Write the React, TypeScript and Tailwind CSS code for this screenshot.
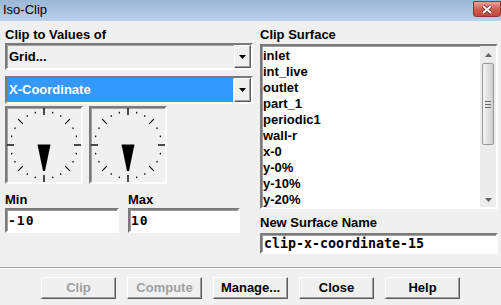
import React from "react";

const sunken =
  "border-2 border-t-[#7a7a7a] border-l-[#7a7a7a] border-b-[#ffffff] border-r-[#ffffff] shadow-[inset_1px_1px_0_#a0a0a0]";
const raised =
  "border border-t-white border-l-white border-b-[#5a5a5a] border-r-[#5a5a5a] shadow-[inset_-1px_-1px_0_#a0a0a0]";

const surfaces = ["inlet", "int_live", "outlet", "part_1", "periodic1", "wall-r", "x-0", "y-0%", "y-10%", "y-20%"];

function DownArrow() {
  return (
    <svg width="7" height="4" viewBox="0 0 7 4">
      <polygon points="0,0 7,0 3.5,4" fill="#000" />
    </svg>
  );
}

function Dropdown({ label, selected }: { label: string; selected?: boolean }) {
  return (
    <div className={`flex h-full w-full ${sunken} bg-[#f0f0f0]`}>
      <div
        className={`flex flex-1 items-center pl-[2px] ${
          selected ? "bg-[#3399ff] text-white" : "text-black"
        }`}
      >
        {label}
      </div>
      <div className={`ml-[1px] flex w-[17px] items-center justify-center bg-[#f0f0f0] ${raised}`}>
        <DownArrow />
      </div>
    </div>
  );
}

function Dial() {
  const c = 39;
  const marks = [];
  for (let i = 0; i < 24; i++) {
    const a = (i * 15 * Math.PI) / 180;
    const sx = Math.sin(a);
    const sy = -Math.cos(a);
    if (i % 6 === 0) {
      marks.push(
        <line key={i} x1={c + sx * 30} y1={c + sy * 30} x2={c + sx * 38} y2={c + sy * 38} stroke="#000" strokeWidth="1.4" />
      );
    } else if (i % 3 === 0) {
      marks.push(
        <line key={i} x1={c + sx * 30} y1={c + sy * 30} x2={c + sx * 36.5} y2={c + sy * 36.5} stroke="#000" strokeWidth="1.1" />
      );
    } else {
      marks.push(<rect key={i} x={c + sx * 33.5 - 0.6} y={c + sy * 33.5 - 0.8} width="1.2" height="1.6" fill="#000" />);
    }
  }
  return (
    <div className={`h-[78px] w-[78px] ${sunken} bg-[#f0f0f0]`}>
      <svg width="74" height="74" viewBox="2 2 74 74">
        {marks}
        <polygon points="32.5,38.5 45.5,38.5 40,65 38,65" fill="#000" />
      </svg>
    </div>
  );
}

function Button({ label, disabled }: { label: string; disabled?: boolean }) {
  return (
    <div
      className={`flex h-[22px] w-[75px] items-center justify-center bg-[#f0f0f0] ${raised} ${
        disabled ? "text-[#a0a0a0]" : "text-black"
      }`}
    >
      {label}
    </div>
  );
}

export default function App() {
  return (
    <div className="flex h-[305px] w-[501px] flex-col overflow-hidden bg-[#f0f0f0] font-['Liberation_Sans',Arial,sans-serif] text-[13px] font-bold">
      {/* title bar */}
      <div className="flex h-[21px] items-start justify-between bg-gradient-to-b from-[#9cb6d6] to-[#bad1ea]">
        <span className="pl-[3px] pt-[2px] text-[13px] font-normal leading-[16px] text-black">Iso-Clip</span>
        <div className="mt-[1px] flex h-[16px] w-[28px] items-center justify-center rounded-b-[3px] border border-[#8a3a32] bg-gradient-to-b from-[#e2a49c] via-[#cf5e52] to-[#c4463a]">
          <svg width="12" height="9" viewBox="0 0 12 9">
            <path d="M2 1 L10 8 M10 1 L2 8" stroke="#5a2a26" strokeWidth="3.4" />
            <path d="M2 1 L10 8 M10 1 L2 8" stroke="#fff" strokeWidth="2" />
          </svg>
        </div>
      </div>

      {/* main content */}
      <div className="flex h-[246px] pt-[6px]">
        <div className="ml-[5px] flex w-[248px] flex-col">
          <div className="h-[16px] leading-[16px]">Clip to Values of</div>
          <div className="h-[27px]">
            <Dropdown label="Grid..." />
          </div>
          <div className="mt-[6px] h-[28px]">
            <Dropdown label="X-Coordinate" selected />
          </div>
          <div className="mt-[2px] flex gap-[6px]">
            <Dial />
            <Dial />
          </div>
          <div className="mt-[8px] flex gap-[9px]">
            <div className="flex w-[114px] flex-col">
              <div className="h-[16px] leading-[16px]">Min</div>
              <div className={`flex h-[25px] items-center bg-white pl-[1px] font-['DejaVu_Sans_Mono',monospace] text-[13px] tracking-[1px] ${sunken}`}>
                -10
              </div>
            </div>
            <div className="flex w-[112px] flex-col">
              <div className="h-[16px] leading-[16px]">Max</div>
              <div className={`flex h-[25px] items-center bg-white pl-[1px] font-['DejaVu_Sans_Mono',monospace] text-[13px] tracking-[1px] ${sunken}`}>
                10
              </div>
            </div>
          </div>
        </div>

        <div className="ml-[7px] flex w-[238px] flex-col">
          <div className="h-[16px] leading-[16px]">Clip Surface</div>
          <div className={`mt-[1px] flex h-[165px] bg-white ${sunken}`}>
            <div className="flex flex-1 flex-col pl-[1px] pt-[2px]">
              {surfaces.map((s) => (
                <div key={s} className="h-[16px] leading-[16px]">
                  {s}
                </div>
              ))}
            </div>
            <div className="flex w-[16px] flex-col items-center bg-[#ececec]">
              <div className="flex h-[17px] items-center justify-center">
                <svg width="7" height="4" viewBox="0 0 7 4">
                  <polygon points="0,4 7,4 3.5,0" fill="#606060" />
                </svg>
              </div>
              <div className="flex h-[82px] w-[12px] flex-col items-center justify-center gap-[2px] rounded-[2px] border border-[#9a9a9a] bg-gradient-to-r from-[#f4f4f4] via-[#e2e2e2] to-[#cfcfcf]">
                <div className="h-[1px] w-[6px] bg-[#6a6a6a]" />
                <div className="h-[1px] w-[6px] bg-[#6a6a6a]" />
                <div className="h-[1px] w-[6px] bg-[#6a6a6a]" />
              </div>
              <div className="flex-1" />
              <div className="flex h-[14px] items-center justify-center">
                <svg width="7" height="4" viewBox="0 0 7 4">
                  <polygon points="0,0 7,0 3.5,4" fill="#606060" />
                </svg>
              </div>
            </div>
          </div>
          <div className="mt-[6px] h-[16px] leading-[16px]">New Surface Name</div>
          <div className={`mt-[2px] flex h-[21px] items-center bg-white pl-[2px] font-['DejaVu_Sans_Mono',monospace] text-[13.3px] ${sunken}`}>
            clip-x-coordinate-15
          </div>
        </div>
      </div>

      {/* separator */}
      <div className="border-t border-b border-t-[#a0a0a0] border-b-white" />

      {/* buttons */}
      <div className="flex justify-center gap-[11px] pt-[8px]">
        <Button label="Clip" disabled />
        <Button label="Compute" disabled />
        <Button label="Manage..." />
        <Button label="Close" />
        <Button label="Help" />
      </div>
    </div>
  );
}
